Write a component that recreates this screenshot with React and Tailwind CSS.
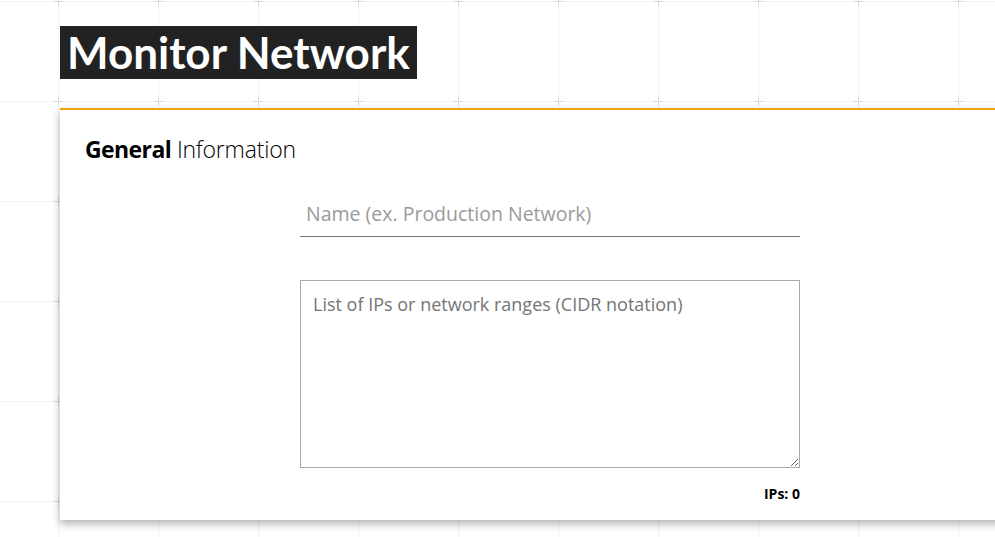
import React from 'react';

// faint blueprint grid behind the page
function GridBackground() {
  return (
    <svg className="absolute inset-0 h-full w-full" aria-hidden="true">
      <defs>
        <pattern id="grid" x="8" y="-49" width="100" height="100" patternUnits="userSpaceOnUse">
          <line x1="50.5" y1="0" x2="50.5" y2="100" stroke="#f3f3f3" strokeWidth="1" />
          <line x1="0" y1="50.5" x2="100" y2="50.5" stroke="#f3f3f3" strokeWidth="1" />
          <line x1="46" y1="50.5" x2="55" y2="50.5" stroke="#d9d9d9" strokeWidth="1" />
          <line x1="50.5" y1="46" x2="50.5" y2="55" stroke="#d9d9d9" strokeWidth="1" />
        </pattern>
      </defs>
      <rect width="100%" height="100%" fill="url(#grid)" />
    </svg>
  );
}

export default function App() {
  return (
    <div className="relative min-h-screen h-[537px] overflow-hidden bg-white font-['Open_Sans','Lato',sans-serif]">
      <GridBackground />
      <div className="relative pl-[60px] pt-[26px]">
        <h1 className="inline-block bg-[#222222] px-[7px] font-['Lato','Open_Sans',sans-serif] text-[44px] font-bold leading-[53px] text-white">
          Monitor Network
        </h1>

        <div className="mt-[29px] h-[412px] w-[980px] border-t-2 border-[#f0a30a] bg-white shadow-[0_4px_8px_rgba(0,0,0,0.3)]">
          <h2 className="pl-[25px] pt-[24px] text-[23px] leading-[30px] tracking-[-0.2px] text-black">
            <span className="font-bold tracking-[-0.6px]">General</span>{' '}
            <span className="font-light">Information</span>
          </h2>

          <div className="ml-[240px] mt-[27px] flex w-[500px] flex-col">
            <input
              type="text"
              placeholder="Name (ex. Production Network)"
              className="h-[46px] w-full border-b border-[#777777] bg-transparent px-[6px] text-[19.5px] text-[#333] outline-none placeholder:text-[#9a9a9a]"
            />
            <textarea
              placeholder="List of IPs or network ranges (CIDR notation)"
              className="mt-[43px] h-[188px] w-full border border-[#a9a9a9] px-[12px] py-[10px] text-[18px] leading-[26px] text-[#333] outline-none placeholder:text-[#757575]"
            />
            <div className="mt-[15px] text-right text-[14px] font-bold text-black">IPs: 0</div>
          </div>
        </div>
      </div>
    </div>
  );
}
